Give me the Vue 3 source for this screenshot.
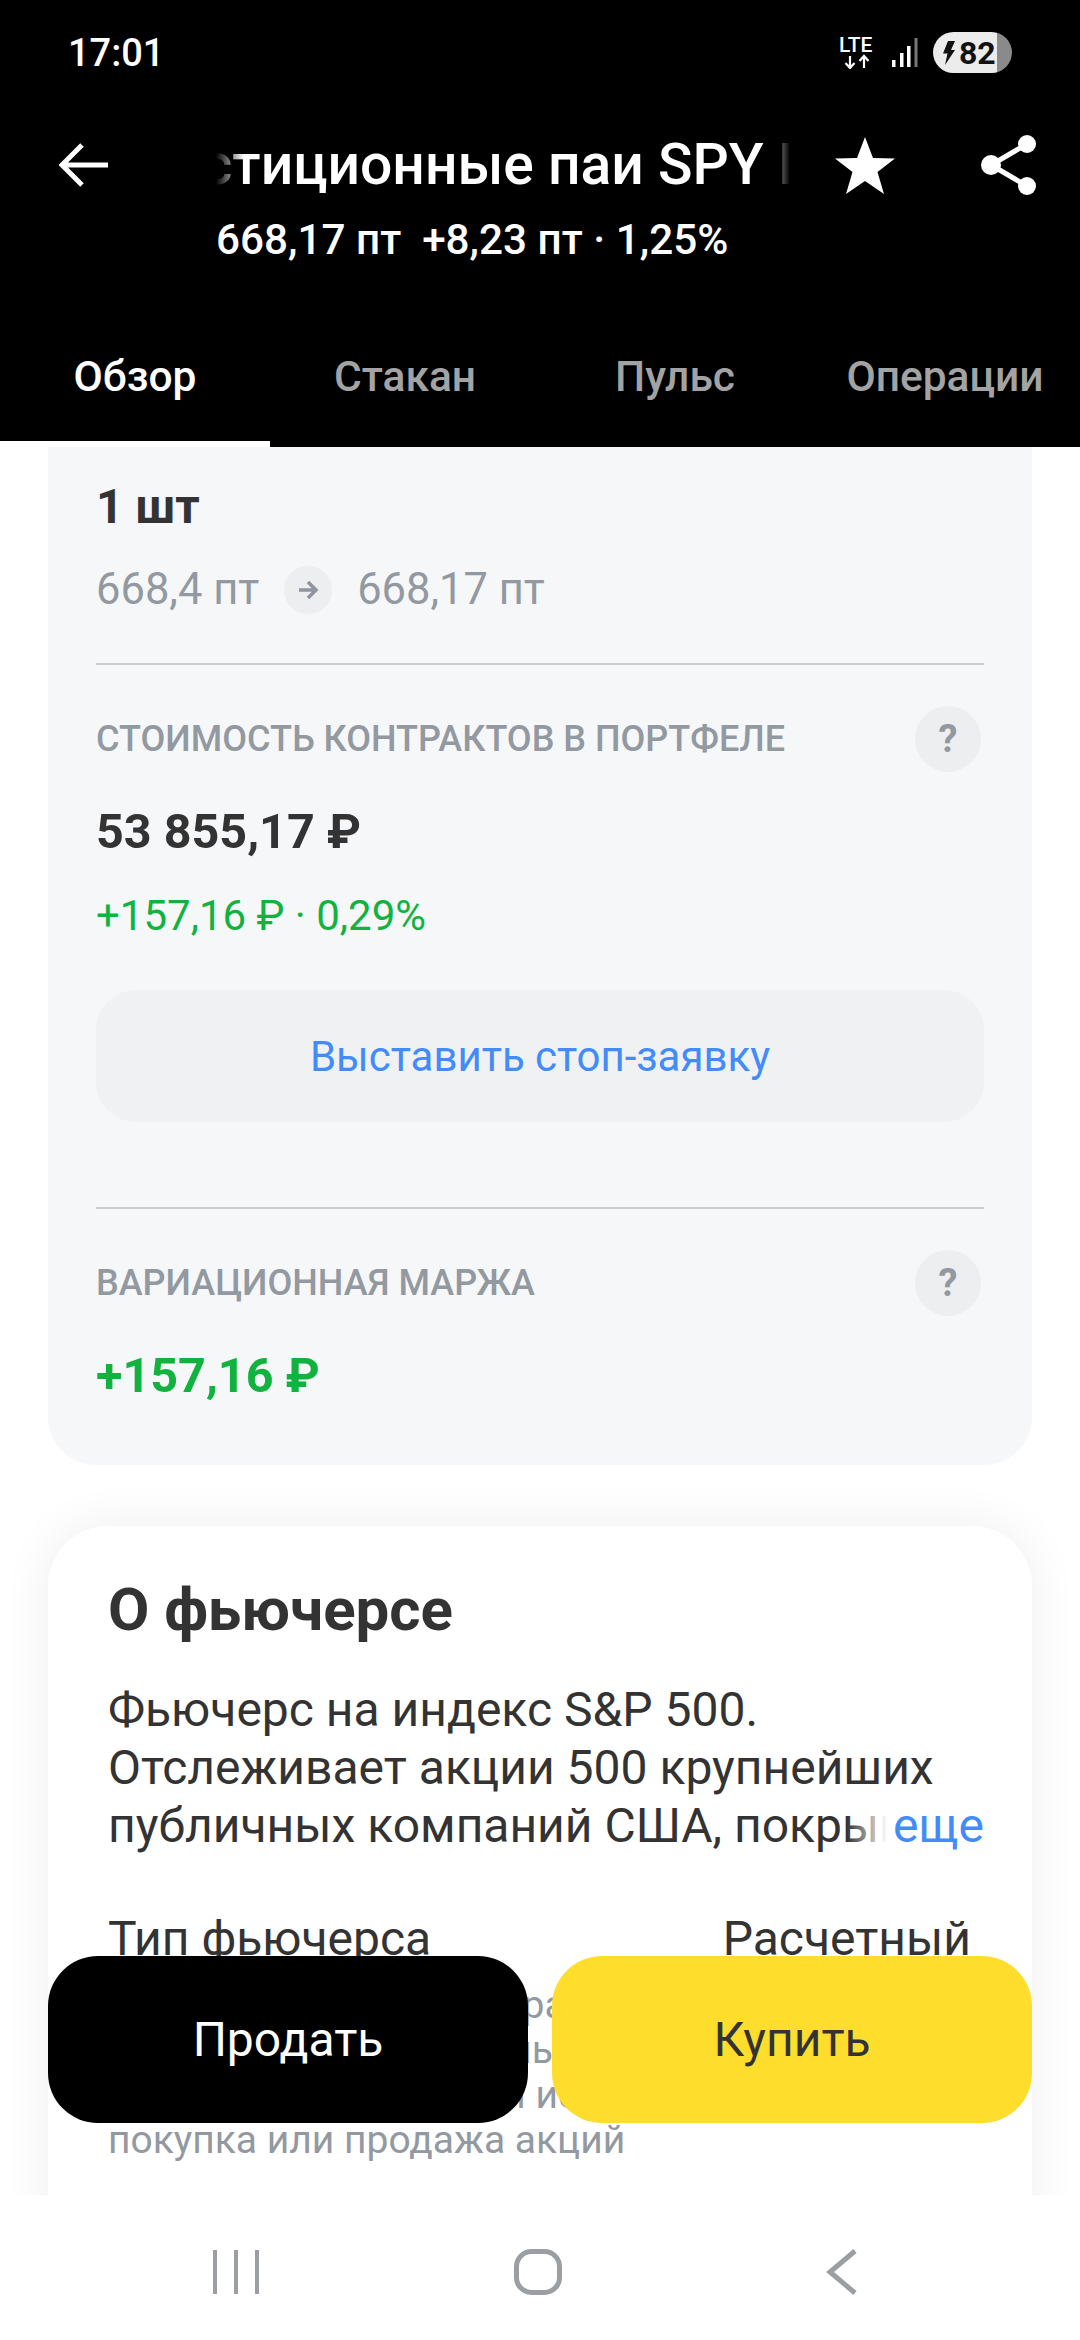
<template>
  <div class="screen">
    <header class="top">
      <div class="status">
        <span class="time">17:01</span>
        <div class="status_icons">
          <svg class="lte" width="38" height="34" viewBox="0 0 38 34">
            <text x="-1" y="17" class="lte_text">LTE</text>
            <path d="M10 21v12M5.500 28l4.500 5 4.500-5M24 33V21M19.500 26l4.500-5 4.500 5" fill="none" stroke="#fff" stroke-width="2.200"/>
          </svg>
          <svg class="signal" width="26" height="30" viewBox="0 0 26 30">
            <rect x="0" y="22" width="3.500" height="7" fill="#fff"/>
            <rect x="8" y="15" width="3.500" height="14" fill="#fff"/>
            <rect x="15" y="8" width="3.500" height="21" fill="#fff"/>
            <rect x="22.500" y="0" width="3" height="29" fill="#777"/>
          </svg>
          <div class="battery">
            <svg width="13" height="24" viewBox="0 0 13 24"><path d="M6 0h7L9 9h4L3 24l2.500-11.500H1z" fill="#111"/></svg>
            <span>82</span>
          </div>
        </div>
      </div>
      <div class="toolbar">
        <svg class="back" width="50" height="44" viewBox="0 0 50 44">
          <path d="M49 22H4M23 2 3 22l20 20" fill="none" stroke="#fff" stroke-width="5"/>
        </svg>
        <div class="title_wrap">
          <div class="title_clip"><span class="title">Инвестиционные паи SPY I</span></div>
          <div class="quote">668,17 пт&nbsp; +8,23 пт · 1,25%</div>
        </div>
        <svg class="star" width="60" height="57" viewBox="0 0 60 57">
          <path d="M30 0l8 21 22 .500-17.500 13.500L49 57 30 44 11 57l6.500-22L0 21.500 22 21z" fill="#fff"/>
        </svg>
        <svg class="share" width="56" height="60" viewBox="0 0 56 60">
          <path d="M46 9 10 30l36 21" fill="none" stroke="#fff" stroke-width="5"/>
          <circle cx="46" cy="9" r="9" fill="#fff"/>
          <circle cx="10" cy="30" r="10" fill="#fff"/>
          <circle cx="46" cy="51" r="9" fill="#fff"/>
        </svg>
      </div>
      <nav class="tabs">
        <div v-for="(tab, i) in tabs" :key="tab" class="tab" :class="{ active: i === 0 }">{{ tab }}</div>
      </nav>
    </header>

    <main class="content">
      <section class="position">
        <div class="count">1 шт</div>
        <div class="prices">
          <span>668,4 пт</span>
          <span class="arrow_dot">
            <svg width="22" height="20" viewBox="0 0 22 20">
              <path d="M2 10h17M11 2l8 8-8 8" fill="none" stroke="#8f959d" stroke-width="3.500"/>
            </svg>
          </span>
          <span>668,17 пт</span>
        </div>
        <div class="line"></div>

        <div class="label_row">
          <span class="label">Стоимость контрактов в портфеле</span>
          <span class="help">?</span>
        </div>
        <div class="value">53 855,17 ₽</div>
        <div class="change">+157,16 ₽ · 0,29%</div>
        <div class="stop_btn">Выставить стоп-заявку</div>
        <div class="line line_second"></div>

        <div class="label_row">
          <span class="label">Вариационная маржа</span>
          <span class="help">?</span>
        </div>
        <div class="value green">+157,16 ₽</div>
      </section>

      <section class="about">
        <h2>О фьючерсе</h2>
        <div class="desc">
          Фьючерс на индекс S&amp;P 500.<br>
          Отслеживает акции 500 крупнейших<br>
          публичных компаний США, покрывая
          <span class="more">еще</span>
        </div>
        <div class="about_row">
          <span>Тип фьючерса</span>
          <span>Расчетный</span>
        </div>
        <p class="note">
          В день истечения контракта<br>
          инвестор получает деньгами<br>
          лишь разницу в цене и исключена<br>
          покупка или продажа акций
        </p>
      </section>

      <div class="actions">
        <div class="action sell">Продать</div>
        <div class="action buy">Купить</div>
      </div>
    </main>

    <footer class="sys_nav">
      <svg width="48" height="46" viewBox="0 0 48 46">
        <path d="M3 1v44M24 1v44M45 1v44" stroke="#9b9ea2" stroke-width="4" fill="none"/>
      </svg>
      <svg width="48" height="46" viewBox="0 0 48 46">
        <rect x="2.500" y="2.500" width="43" height="41" rx="15" stroke="#9b9ea2" stroke-width="5" fill="none"/>
      </svg>
      <svg width="32" height="46" viewBox="0 0 32 46">
        <path d="M29 2 4 23l25 21" stroke="#9b9ea2" stroke-width="5" fill="none"/>
      </svg>
    </footer>
  </div>
</template>

<script setup>
const tabs = ['Обзор', 'Стакан', 'Пульс', 'Операции']
</script>

<style>
html, body { margin: 0; background: #fff; }
</style>

<style scoped>
.screen {
  width: 1080px;
  height: 2340px;
  display: flex;
  flex-direction: column;
  overflow: hidden;
  background: #fff;
  font-family: Roboto, "Liberation Sans", sans-serif;
  color: #333;
}

.top {
  height: 447px;
  flex: none;
  background: #000;
  color: #fff;
  display: flex;
  flex-direction: column;
  position: relative;
  z-index: 2;
}
.status {
  height: 105px;
  padding: 0 68px;
  display: flex;
  justify-content: space-between;
  align-items: flex-start;
}
.time {
  margin-top: 31px;
  font-size: 38px;
  line-height: 44px;
  font-weight: 500;
}
.status_icons {
  position: absolute;
  top: 32px;
  right: 68px;
  display: flex;
  align-items: flex-start;
}
.lte { margin-top: 3px; }
.lte_text { font: 500 21px Roboto, sans-serif; fill: #fff; }
.signal { margin: 6px 0 0 14px; }
.battery {
  width: 79px;
  height: 41px;
  margin-left: 15px;
  border-radius: 21px;
  background: linear-gradient(90deg, #ececec 64px, #8a8a8a 64px);
  color: #111;
  display: flex;
  align-items: center;
  padding-left: 9px;
  gap: 4px;
  box-sizing: border-box;
  font-size: 32px;
  font-weight: 700;
}

.toolbar {
  height: 170px;
  display: flex;
  align-items: flex-start;
  position: relative;
}
.back { margin: 38px 0 0 59px; flex: none; }
.title_wrap { margin-left: 107px; width: 574px; flex: none; }
.title_clip {
  display: flex;
  justify-content: flex-end;
  overflow: hidden;
  white-space: nowrap;
  height: 62px;
  margin-top: 30px;
  -webkit-mask-image: linear-gradient(90deg, transparent 0, #000 28px, #000 550px, transparent 574px);
  mask-image: linear-gradient(90deg, transparent 0, #000 28px, #000 550px, transparent 574px);
}
.title {
  font-size: 57px;
  line-height: 60px;
  font-weight: 500;
  flex: none;
  margin-right: -4px;
}
.quote {
  margin-top: 20px;
  font-size: 42.250px;
  line-height: 46px;
  font-weight: 500;
  white-space: nowrap;
}
.star { margin: 32px 0 0 45px; flex: none; }
.share { margin: 30px 0 0 86px; flex: none; }

.tabs {
  display: grid;
  grid-template-columns: repeat(4, 270px);
  height: 172px;
}
.tab {
  font-size: 42.500px;
  font-weight: 500;
  line-height: 46px;
  padding-top: 79px;
  text-align: center;
  color: #a3a3a3;
  box-sizing: border-box;
  height: 172px;
}
.tab.active {
  color: #fff;
  border-bottom: 6px solid #fff;
}

.content {
  flex: 1;
  min-height: 0;
  position: relative;
  overflow: hidden;
  padding: 0 48px;
}

.position {
  height: 1018px;
  box-sizing: border-box;
  padding: 29px 48px 0;
  background: #f6f7f9;
  border-radius: 0 0 48px 48px;
}
.count {
  font-size: 48px;
  line-height: 62px;
  font-weight: 700;
}
.prices {
  margin-top: 28px;
  display: flex;
  align-items: center;
  gap: 25px;
  font-size: 43.500px;
  line-height: 48px;
  color: #9299a1;
}
.arrow_dot {
  width: 48px;
  height: 48px;
  border-radius: 50%;
  background: #eceef0;
  display: flex;
  align-items: center;
  justify-content: center;
}
.line {
  height: 2px;
  margin-top: 49px;
  background: #c9ccd1;
}
.line_second { margin-top: 85px; }

.label_row {
  margin-top: 41px;
  display: flex;
  align-items: center;
  justify-content: space-between;
  height: 66px;
}
.label {
  font-size: 36px;
  font-weight: 500;
  color: #9299a1;
  text-transform: uppercase;
}
.help {
  width: 66px;
  height: 66px;
  margin-right: 3px;
  border-radius: 50%;
  background: #eceef0;
  color: #9299a1;
  font-size: 38px;
  font-weight: 700;
  display: flex;
  align-items: center;
  justify-content: center;
}
.value {
  margin-top: 33px;
  font-size: 48.500px;
  line-height: 54px;
  font-weight: 700;
}
.green { color: #12b23f; }
.change {
  margin-top: 34px;
  font-size: 42px;
  line-height: 46px;
  color: #12b23f;
}
.stop_btn {
  margin-top: 51px;
  height: 132px;
  border-radius: 40px;
  background: #eff1f3;
  color: #428bf9;
  font-size: 42px;
  display: flex;
  align-items: center;
  justify-content: center;
}

.about {
  margin-top: 61px;
  height: 1000px;
  box-sizing: border-box;
  padding: 50px 48px 0 60px;
  background: #fff;
  border-radius: 60px 60px 0 0;
  box-shadow: 0 0 50px rgba(0, 0, 0, 0.07);
}
.about h2 {
  margin: 0;
  font-size: 60px;
  line-height: 68px;
  font-weight: 700;
}
.desc {
  position: relative;
  margin-top: 37px;
  font-size: 48px;
  line-height: 58px;
  white-space: nowrap;
  overflow: hidden;
  height: 174px;
}
.more {
  position: absolute;
  right: 0;
  bottom: 0;
  padding-left: 46px;
  color: #428bf9;
  background: linear-gradient(90deg, rgba(255, 255, 255, 0), #fff 40px);
}
.about_row {
  margin-top: 57px;
  padding-right: 13px;
  display: flex;
  justify-content: space-between;
  font-size: 48px;
  line-height: 54px;
}
.note {
  margin: 17px 0 0;
  font-size: 39px;
  line-height: 45px;
  color: #9299a1;
  white-space: nowrap;
}

.actions {
  position: absolute;
  left: 48px;
  right: 48px;
  top: 1509px;
  display: flex;
  gap: 24px;
}
.action {
  flex: 1;
  height: 167px;
  border-radius: 50px;
  display: flex;
  align-items: center;
  justify-content: center;
  font-size: 48px;
}
.sell { background: #000; color: #fff; }
.buy { background: #ffdd2d; color: #333; }

.sys_nav {
  height: 145px;
  box-sizing: border-box;
  flex: none;
  position: relative;
  background: #fff;
  display: flex;
  align-items: flex-start;
  padding: 54px 0 0 212px;
}
.sys_nav svg:nth-child(2) { margin-left: 254px; }
.sys_nav svg:last-child { margin-left: 264px; }
</style>
